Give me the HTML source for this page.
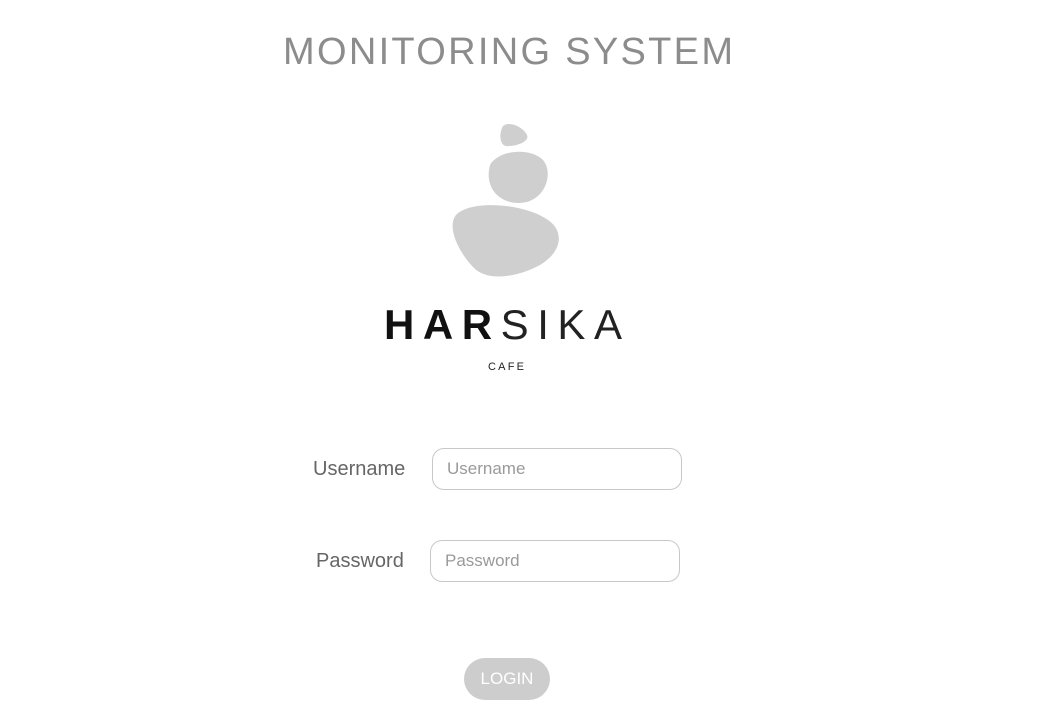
<!DOCTYPE html>
<html><head><meta charset="utf-8"><style>
body{margin:0;width:1056px;height:710px;background:#fff;position:relative;overflow:hidden;font-family:"Liberation Sans",sans-serif}
.abs{position:absolute}
.lbl{font-size:20px;color:#666}
.inp{border:1px solid #c8c8c8;border-radius:12px;height:40px;box-sizing:border-box;font-size:17px;color:#9a9a9a;padding-left:14px;line-height:40px}
</style></head><body>
<svg class="abs" style="left:0;top:0" width="1056" height="710">
<text x="283" y="64" font-family="Liberation Sans" font-size="38" fill="#8c8c8c" textLength="450" lengthAdjust="spacing">MONITORING SYSTEM</text>
<path d="M502 128 C505 120 522 125 527 135 C530 142 515 147 506 146 C500 145 499 135 502 128 Z" fill="#cfcfcf"/>
<path d="M490 165 C498 150 530 147 543 160 C553 172 547 196 527 202 C505 207 483 192 490 165 Z" fill="#cfcfcf"/>
<path d="M456 215 C470 200 520 203 545 218 C566 230 562 252 540 265 C518 277 488 282 474 268 C460 254 446 228 456 215 Z" fill="#cfcfcf"/>
<text x="384" y="339" font-family="Liberation Sans" font-size="42" fill="#111" textLength="238" lengthAdjust="spacing"><tspan font-weight="bold">HAR</tspan><tspan fill="#222">SIKA</tspan></text>
<text x="488" y="370" font-family="Liberation Sans" font-size="11" fill="#222" textLength="36" lengthAdjust="spacing">CAFE</text>
</svg>
<div class="abs lbl" style="left:313px;top:458px">Username</div>
<div class="abs inp" style="left:432px;top:448px;width:250px;height:42px">Username</div>
<div class="abs lbl" style="left:316px;top:550px">Password</div>
<div class="abs inp" style="left:430px;top:540px;width:250px;height:42px">Password</div>
<div class="abs" style="left:464px;top:658px;width:86px;height:42px;border-radius:21px;background:#cdcdcd;color:#fff;font-size:17px;text-align:center;line-height:42px">LOGIN</div>
</body></html>
